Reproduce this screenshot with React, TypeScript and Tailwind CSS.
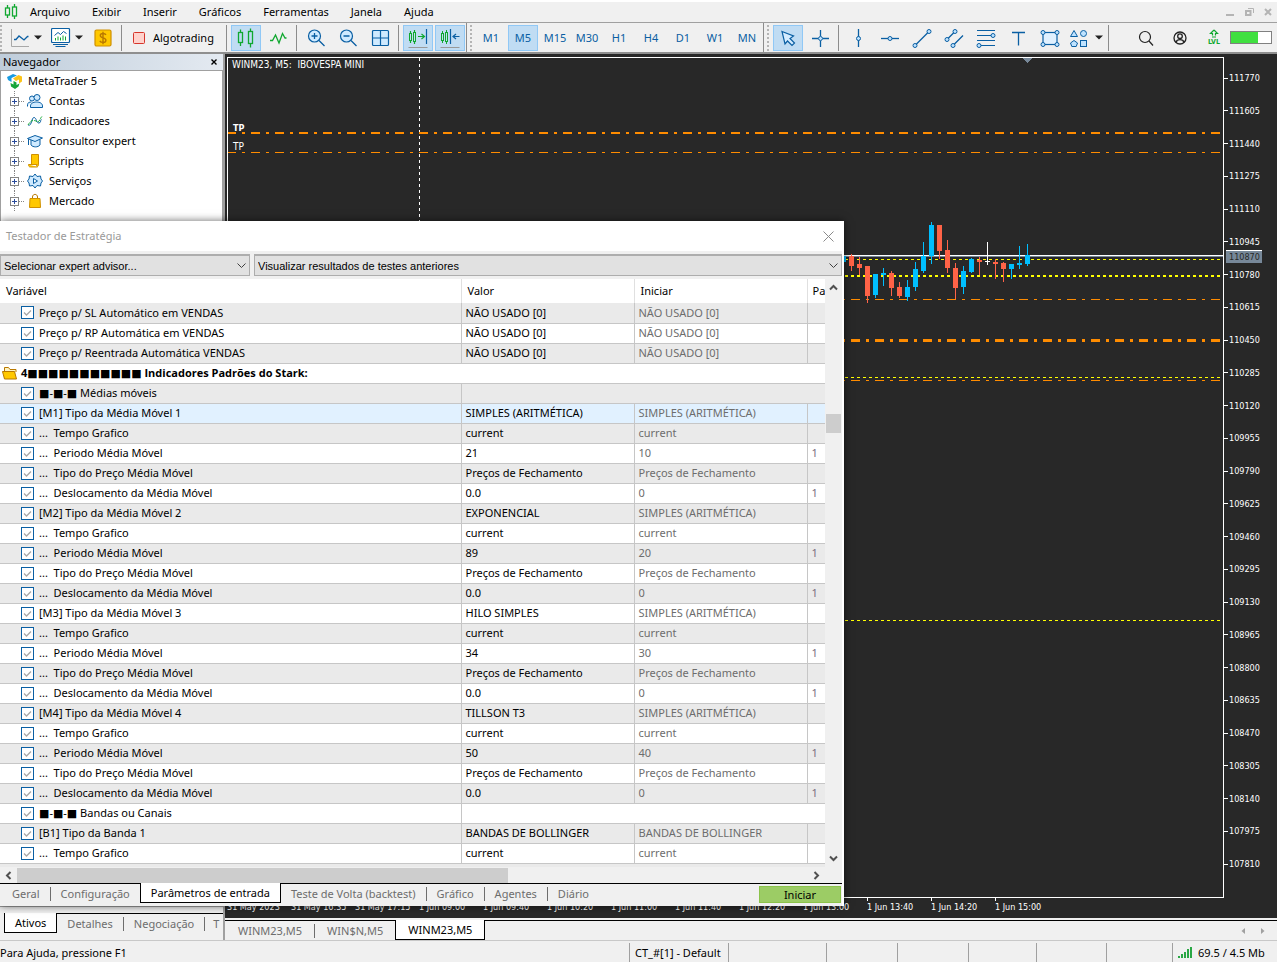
import { ReactNode } from 'react'
import clsx from 'clsx'

const MENU = ['Arquivo', 'Exibir', 'Inserir', 'Gráficos', 'Ferramentas', 'Janela', 'Ajuda']
const TIMEFRAMES = ['M1', 'M5', 'M15', 'M30', 'H1', 'H4', 'D1', 'W1', 'MN']
const PRICES = Array.from({ length: 25 }, (_, i) => 111770 - i * 165)
const TIMES = [
    '31 May 2023',
    '31 May 16:35',
    '31 May 17:15',
    '1 Jun 09:00',
    '1 Jun 09:40',
    '1 Jun 10:20',
    '1 Jun 11:00',
    '1 Jun 11:40',
    '1 Jun 12:20',
    '1 Jun 13:00',
    '1 Jun 13:40',
    '1 Jun 14:20',
    '1 Jun 15:00',
]

type Row = { label: string; value?: string; start?: string; step?: string; group?: boolean; section?: boolean }

const SIMPLE = 'SIMPLES (ARITMÉTICA)'
const CLOSE_PRICE = 'Preços de Fechamento'

function movingAverage(index: number, type: string, period: string, start: string): Row[] {
    return [
        { label: `[M${index}] Tipo da Média Móvel ${index}`, value: type, start: SIMPLE },
        { label: '...  Tempo Grafico', value: 'current', start: 'current' },
        { label: '...  Periodo Média Móvel', value: period, start, step: '1' },
        { label: '...  Tipo do Preço Média Móvel', value: CLOSE_PRICE, start: CLOSE_PRICE },
        { label: '...  Deslocamento da Média Móvel', value: '0.0', start: '0', step: '1' },
    ]
}

const ROWS: Row[] = [
    { label: 'Preço p/ SL Automático em VENDAS', value: 'NÃO USADO [0]', start: 'NÃO USADO [0]' },
    { label: 'Preço p/ RP Automática em VENDAS', value: 'NÃO USADO [0]', start: 'NÃO USADO [0]' },
    { label: 'Preço p/ Reentrada Automática VENDAS', value: 'NÃO USADO [0]', start: 'NÃO USADO [0]' },
    { label: '4■■■■■■■■■■■ Indicadores Padrões do Stark:', group: true },
    { label: '■-■-■ Médias móveis', section: true },
    ...movingAverage(1, SIMPLE, '21', '10'),
    ...movingAverage(2, 'EXPONENCIAL', '89', '20'),
    ...movingAverage(3, 'HILO SIMPLES', '34', '30'),
    ...movingAverage(4, 'TILLSON T3', '50', '40'),
    { label: '■-■-■ Bandas ou Canais', section: true },
    { label: '[B1] Tipo da Banda 1', value: 'BANDAS DE BOLLINGER', start: 'BANDAS DE BOLLINGER' },
    { label: '...  Tempo Grafico', value: 'current', start: 'current' },
]
const SELECTED_ROW = 5

// [color, body top, body bottom, wick top, wick bottom]
const UP = '#00bfff'
const DOWN = '#ff6347'
const CANDLES: [string, number, number, number, number][] = [
    [UP, 198, 204, 198, 204],
    [DOWN, 198, 208, 196, 213],
    [DOWN, 206, 210, 199, 217],
    [DOWN, 208, 238, 208, 245],
    [UP, 216, 237, 216, 240],
    [UP, 215, 217, 210, 228],
    [DOWN, 215, 230, 213, 238],
    [DOWN, 229, 238, 224, 240],
    [UP, 229, 239, 222, 243],
    [UP, 211, 229, 204, 233],
    [UP, 198, 213, 184, 215],
    [UP, 167, 198, 164, 206],
    [DOWN, 167, 193, 167, 201],
    [DOWN, 192, 210, 182, 215],
    [DOWN, 210, 230, 205, 241],
    [UP, 213, 229, 208, 236],
    [UP, 201, 214, 200, 215],
    [DOWN, 202, 204, 199, 217],
    ['#ffffff', 203, 204, 184, 207],
    [DOWN, 204, 206, 201, 221],
    [DOWN, 205, 211, 204, 224],
    [UP, 206, 211, 206, 221],
    [UP, 205, 207, 188, 211],
    [UP, 197, 206, 186, 208],
]

/* ---------- icons ---------- */

function Svg({ size = 20, children }: { size?: number; children: ReactNode }) {
    return (
        <svg width={size} height={size} viewBox={`0 0 ${size} ${size}`} fill="none" stroke="#0a5fa3" className="shrink-0">
            {children}
        </svg>
    )
}

function Caret() {
    return (
        <svg width="8" height="5" viewBox="0 0 8 5" className="shrink-0">
            <path d="M0 0.5h8L4 4.5z" fill="#222" />
        </svg>
    )
}

function Candles() {
    return (
        <Svg>
            <g stroke="#10a830" strokeWidth="1.3">
                <path d="M4.5 1.5v3M4.5 15v3M14.5 0.5v3M14.5 16v3.5" />
                <rect x="2.5" y="4.5" width="4" height="10" />
                <rect x="12.5" y="3.5" width="4" height="12" />
            </g>
        </Svg>
    )
}

const icons = {
    lineChart: (
        <Svg>
            <path d="M1.5 1v17.5H19" stroke="#a8a8a8" />
            <path d="M4 11.500h2l3-3.500 5 4 3.500-3.500h1" strokeWidth="1.3" />
        </Svg>
    ),
    profiles: (
        <Svg>
            <rect x="0.5" y="0.5" width="18" height="14" rx="1" fill="#fff" strokeWidth="1.2" />
            <path d="M3.5 7.500l3.500-3 2.500 2L12.500 3.500l3 2M2 16.500h15M4.500 18.500h10" />
            <path d="M4.5 12.500V10M7 12.500V8.500M9.500 12.500V9.500M12 12.500V7.500M14.500 12.500V8.500" stroke="#10a830" />
        </Svg>
    ),
    dollar: (
        <Svg>
            <rect x="2" y="2" width="16" height="16" rx="1.5" fill="#ffc800" stroke="#cf9000" strokeWidth="1.2" />
            <path
                d="M13 6.8c-.6-1-1.700-1.300-3-1.300-1.600 0-2.700.7-2.700 2 0 3 5.600 1.600 5.600 4.700 0 1.500-1.300 2.200-2.900 2.200-1.400 0-2.600-.5-3.200-1.600M10 3.800v12.500"
                stroke="#b87800"
                strokeWidth="1.4"
            />
        </Svg>
    ),
    stop: (
        <Svg size={12}>
            <rect x="0.5" y="0.5" width="11" height="11" rx="1" fill="#ffd2cc" stroke="#d6352b" />
        </Svg>
    ),
    wave: (
        <Svg>
            <path d="M2 12.500h2.500l3-5.500 3.500 8 3.500-9.500 2.500 4.500h1.500" stroke="#10a830" strokeWidth="1.3" />
        </Svg>
    ),
    zoomIn: (
        <Svg>
            <circle cx="8.5" cy="8" r="6" fill="#cfeaff" strokeWidth="1.2" />
            <path d="M5.5 8h6M8.500 5v6M13 12.500l5.500 5.500" strokeWidth="1.3" />
        </Svg>
    ),
    zoomOut: (
        <Svg>
            <circle cx="8.5" cy="8" r="6" fill="#cfeaff" strokeWidth="1.2" />
            <path d="M5.5 8h6M13 12.500l5.500 5.500" strokeWidth="1.3" />
        </Svg>
    ),
    tile: (
        <Svg>
            <rect x="2.5" y="2.5" width="16" height="15" rx="1" fill="#cfeaff" strokeWidth="1.2" />
            <path d="M10.5 2.500v15M2.500 10h16" strokeWidth="1.2" />
        </Svg>
    ),
    scrollEnd: (
        <Svg>
            <path d="M0.5 19.500h19" stroke="#999" />
            <g stroke="#10a830">
                <path d="M2.5 3v2.500M2.500 13v2M6.500 2v2.500M6.500 14v2M10 8.500h6.500M13.500 6l3 2.500-3 2.500" strokeWidth="1.2" />
                <rect x="1.5" y="5.5" width="2" height="7" />
                <rect x="5.5" y="4.5" width="2" height="9" />
            </g>
            <path d="M18.5 1v15" strokeWidth="1.2" />
        </Svg>
    ),
    shift: (
        <Svg>
            <path d="M0.5 19.500h19" stroke="#999" />
            <g stroke="#10a830">
                <path d="M2.5 3v2.500M2.500 13v2M6.500 2v2.500M6.500 14v2" />
                <rect x="1.5" y="5.5" width="2" height="7" />
                <rect x="5.5" y="4.5" width="2" height="9" />
            </g>
            <path d="M10.5 1v15M13 8.500h6.500M16 6l-3 2.500 3 2.500" strokeWidth="1.2" />
        </Svg>
    ),
    cursor: (
        <Svg>
            <path d="M4 3.500l11.500 4.500-3.500 2.500 4.500 4.500-2.500 2.500-4.500-4.500-2.500 3z" fill="#d5ecff" strokeWidth="1.2" />
        </Svg>
    ),
    crosshair: (
        <Svg>
            <path d="M10.5 2v6M10.500 13v6M2 10.500h6M13 10.500h6" strokeWidth="1.3" />
            <circle cx="10.5" cy="10.5" r="2" fill="#bfe3ff" />
        </Svg>
    ),
    vline: (
        <Svg>
            <path d="M10.5 1v18" strokeWidth="1.3" />
            <circle cx="10.5" cy="10.5" r="2" fill="#bfe3ff" />
        </Svg>
    ),
    hline: (
        <Svg>
            <path d="M1 10.500h18" strokeWidth="1.3" />
            <circle cx="10" cy="10.5" r="2" fill="#bfe3ff" />
        </Svg>
    ),
    trend: (
        <Svg>
            <path d="M3 17.500L17 3.500" strokeWidth="1.3" />
            <circle cx="3" cy="17.5" r="2" fill="#bfe3ff" />
            <circle cx="17" cy="3.5" r="2" fill="#bfe3ff" />
        </Svg>
    ),
    channel: (
        <Svg>
            <path d="M3 11.500l8-8M9 17.500L19 7.500" strokeWidth="1.3" />
            <circle cx="3" cy="11.5" r="2" fill="#bfe3ff" />
            <circle cx="11" cy="3.5" r="2" fill="#bfe3ff" />
            <circle cx="9" cy="17.5" r="2" fill="#bfe3ff" />
        </Svg>
    ),
    fibo: (
        <Svg>
            <path d="M1 2.500h18M1 7.500h16M1 12.500h18M3 17.500h16" strokeWidth="1.2" />
            <circle cx="17" cy="7.5" r="2" fill="#bfe3ff" />
            <circle cx="3" cy="17.5" r="2" fill="#bfe3ff" />
        </Svg>
    ),
    text: (
        <Svg>
            <path d="M4 4.500h13M10.500 4.500v13" strokeWidth="1.3" />
        </Svg>
    ),
    rect: (
        <Svg>
            <rect x="3" y="4.5" width="14" height="12" fill="#e0f1ff" strokeWidth="1.2" />
            <g fill="#bfe3ff">
                <circle cx="3" cy="4.5" r="2" />
                <circle cx="17" cy="4.5" r="2" />
                <circle cx="3" cy="16.5" r="2" />
                <circle cx="17" cy="16.5" r="2" />
            </g>
        </Svg>
    ),
    shapes: (
        <Svg>
            <g fill="#bfe3ff">
                <path d="M5 2.500l3.500 6h-7z" />
                <circle cx="14.5" cy="5.5" r="3" />
                <path d="M5 12.500l3.500 2.500-1.300 3.500H2.800L1.500 15z" />
                <rect x="11.5" y="12.5" width="6" height="6" />
            </g>
        </Svg>
    ),
    search: (
        <Svg>
            <circle cx="9" cy="9" r="5.5" stroke="#222" strokeWidth="1.2" />
            <path d="M13 13l4 4.500" stroke="#222" strokeWidth="1.2" />
        </Svg>
    ),
    user: (
        <Svg>
            <g stroke="#222" strokeWidth="1.3">
                <circle cx="10" cy="10" r="6" />
                <circle cx="10" cy="8.2" r="2.3" />
                <path d="M6 14.500c.5-2 2-2.800 4-2.800s3.500.8 4 2.800" />
            </g>
        </Svg>
    ),
    contas: (
        <Svg size={16}>
            <g fill="#cfeaff">
                <circle cx="5" cy="5.5" r="2.5" />
                <path d="M0.500 13.500v-2c0-1.500 1.500-2.500 4-2.500" />
                <circle cx="10" cy="4.5" r="3" />
                <path d="M3.500 14.500v-1.500c0-2.500 2.500-4 6-4s6 1.500 6 4v1.500z" />
            </g>
        </Svg>
    ),
    indicadores: (
        <Svg size={16}>
            <path d="M1.500 12.500c3.500 0 3-8 5.500-8s2.500 6 5 5.500 1-3 2.500-3.500" />
            <path d="M1 12c2-3 3-4.500 6-4.500s3 3 5 .5 1.500-3.500 3.500-5" stroke="#10a830" strokeDasharray="3 1" />
        </Svg>
    ),
    consultor: (
        <Svg size={16}>
            <path d="M4 7v5c2 2.500 7 2.500 9 0V6.500" fill="#cfeaff" />
            <path d="M0.5 5.500l7.500-3 7.500 2.500-7.500 3.500zM1.500 6v6" fill="#cfeaff" />
        </Svg>
    ),
    scripts: (
        <Svg size={16}>
            <path d="M4.500 1.500h7v10h-7z" fill="#ffc800" stroke="#cf9000" />
            <path d="M1.500 11.500h8v1c0 1.500 2 1.500 2-1M1.500 11.500c0 1.500.5 2.500 2 2.500h7" fill="#ffc800" stroke="#cf9000" />
        </Svg>
    ),
    servicos: (
        <Svg size={16}>
            <path
                d="M8 1l2 2.500 3.500-.5.500 3L15.500 8 14 10l-.5 3-3.500-.5L8 15l-2-2.500-3.500.5L2 10 .5 8 2 6l.5-3 3.500.5z"
                fill="#cfeaff"
            />
            <path d="M6.500 5.500l4 2.500-4 2.500z" fill="#fff" />
        </Svg>
    ),
    mercado: (
        <Svg size={16}>
            <path d="M5.500 6V4c0-3.500 5-3.500 5 0v2" stroke="#b87800" />
            <path d="M3 5.500h10l.5 9h-11z" fill="#ffc800" stroke="#cf9000" />
        </Svg>
    ),
}

function LevelIcon() {
    return (
        <span className="flex flex-col items-center">
            <svg width="10" height="9" viewBox="0 0 10 9" fill="none" stroke="#10a830" strokeWidth="1.2">
                <path d="M5 1L1.500 4.500h2V6.500M5 1l3.500 3.500h-2V6.500M3 8h4" />
            </svg>
            <span className="font-['DejaVu_Sans_Condensed','DejaVu_Sans',sans-serif] text-[7px] font-bold leading-[8px] text-[#10a830]">
                LVL
            </span>
        </span>
    )
}

/* ---------- toolbar ---------- */

function Tool({ label, active, wide, children }: { label: string; active?: boolean; wide?: boolean; children: ReactNode }) {
    return (
        <button
            aria-label={label}
            className={clsx(
                'flex h-[26px] shrink-0 items-center justify-center border',
                wide ? 'w-[38px] gap-1.5' : 'w-[30px]',
                active ? 'border-[#90c8f6] bg-[#c0dcf3]' : 'border-transparent',
            )}
        >
            {children}
        </button>
    )
}

const Separator = () => <span className="ml-[3px] mr-1 h-[26px] w-px shrink-0 bg-[#8c8c8c]" />
const Grip = () => <span className="h-[26px] w-0 shrink-0 border-l-2 border-dotted border-[#b4b4b4]" />

function GroupEnd() {
    return (
        <span className="flex shrink-0 items-center gap-[3px] pl-px pr-1">
            <span className="h-[29px] w-px bg-[#8c8c8c]" />
            <Grip />
        </span>
    )
}

function Toolbar() {
    return (
        <div className="flex h-8 items-center border-b-2 border-t border-b-[#8f8f8f] border-t-[#a0a0a0] bg-[#f0f0f0]">
            <Grip />
            <button aria-label="Novo gráfico" className="ml-2 flex w-[41px] shrink-0 items-center gap-1">
                {icons.lineChart}
                <Caret />
            </button>
            <button aria-label="Perfis" className="flex w-[37px] shrink-0 items-center gap-1">
                {icons.profiles}
                <Caret />
            </button>
            <Tool label="Depósito">{icons.dollar}</Tool>
            <Separator />
            <button className="flex w-[97px] shrink-0 items-center gap-2 pl-[7px] text-black">
                {icons.stop}
                Algotrading
            </button>
            <Separator />
            <div className="flex gap-0.5">
                <Tool label="Candles" active>
                    <Candles />
                </Tool>
                <Tool label="Linha">{icons.wave}</Tool>
            </div>
            <Separator />
            <div className="flex gap-0.5">
                <Tool label="Mais zoom">{icons.zoomIn}</Tool>
                <Tool label="Menos zoom">{icons.zoomOut}</Tool>
                <Tool label="Lado a lado">{icons.tile}</Tool>
            </div>
            <Separator />
            <div className="flex gap-0.5">
                <Tool label="Rolagem automática" active>
                    {icons.scrollEnd}
                </Tool>
                <Tool label="Deslocar gráfico" active>
                    {icons.shift}
                </Tool>
            </div>
            <GroupEnd />
            <div className="flex gap-0.5 text-[#0a5fa3]">
                {TIMEFRAMES.map((tf) => (
                    <Tool key={tf} label={tf} active={tf === 'M5'}>
                        {tf}
                    </Tool>
                ))}
            </div>
            <GroupEnd />
            <div className="flex gap-0.5">
                <Tool label="Cursor" active>
                    {icons.cursor}
                </Tool>
                <Tool label="Mira">{icons.crosshair}</Tool>
            </div>
            <Separator />
            <div className="flex gap-0.5">
                <Tool label="Linha vertical">{icons.vline}</Tool>
                <Tool label="Linha horizontal">{icons.hline}</Tool>
                <Tool label="Linha de tendência">{icons.trend}</Tool>
                <Tool label="Canal">{icons.channel}</Tool>
                <Tool label="Fibonacci">{icons.fibo}</Tool>
                <Tool label="Texto">{icons.text}</Tool>
                <Tool label="Retângulo">{icons.rect}</Tool>
                <Tool label="Objetos" wide>
                    {icons.shapes}
                    <Caret />
                </Tool>
            </div>
            <Separator />
            <div className="ml-auto flex items-center gap-1 pr-px">
                <Tool label="Pesquisar">{icons.search}</Tool>
                <Tool label="Conta">{icons.user}</Tool>
                <Tool label="Nível">
                    <LevelIcon />
                </Tool>
            </div>
            <div className="mr-[5px] flex h-[13px] w-[42px] border border-[#808080] bg-white">
                <span className="w-2/3 bg-[#40e040]" />
            </div>
        </div>
    )
}

function MenuBar() {
    return (
        <div className="flex h-[22px] items-center border-t-2 border-white bg-[#f0f0f0] pl-1 pr-[5px] text-black">
            <svg width="15" height="16" viewBox="0 0 15 16" fill="none" stroke="#10a830" strokeWidth="1.3">
                <path d="M3.5 1v3M3.500 11v3M10.500 0v3M10.500 12v3" />
                <rect x="1.5" y="4" width="4" height="7" />
                <rect x="8.5" y="3" width="4" height="9" />
            </svg>
            <nav className="flex">
                {MENU.map((item) => (
                    <button key={item} className="px-[11px]">
                        {item}
                    </button>
                ))}
            </nav>
            <div className="ml-auto flex items-center gap-2.5">
                <button aria-label="Minimizar">
                    <svg width="9" height="8" viewBox="0 0 9 8">
                        <path d="M0 7h8" stroke="#b4b4b4" strokeWidth="2" />
                    </svg>
                </button>
                <button aria-label="Restaurar">
                    <svg width="9" height="8" viewBox="0 0 9 8" fill="none" stroke="#b4b4b4">
                        <path d="M3 0.500h5.500V5" />
                        <rect x="1" y="3" width="4.5" height="4" strokeWidth="2" />
                    </svg>
                </button>
                <button aria-label="Fechar">
                    <svg width="8" height="8" viewBox="0 0 8 8">
                        <path d="M1 1l6 6M7 1L1 7" stroke="#b4b4b4" strokeWidth="2" />
                    </svg>
                </button>
            </div>
        </div>
    )
}

/* ---------- navigator ---------- */

const TREE = [
    { label: 'Contas', icon: icons.contas },
    { label: 'Indicadores', icon: icons.indicadores },
    { label: 'Consultor expert', icon: icons.consultor },
    { label: 'Scripts', icon: icons.scripts },
    { label: 'Serviços', icon: icons.servicos },
    { label: 'Mercado', icon: icons.mercado },
]

function Navigator() {
    return (
        <aside className="flex w-[225px] shrink-0 flex-col border-r-2 border-[#a0a0a0] bg-[#f0f0f0] text-black">
            <header className="flex h-4 items-center justify-between bg-linear-to-r from-[#bfcddb] to-[#e4eaf1] pl-[3px] pr-1.5">
                Navegador
                <button aria-label="Fechar navegador">
                    <svg width="6" height="6" viewBox="0 0 6 6">
                        <path d="M0.5 0.500l5 5M5.500 0.500l-5 5" stroke="#000" strokeWidth="1.4" />
                    </svg>
                </button>
            </header>
            <div className="flex-1 border border-[#a0a0a0] bg-white">
                <div className="flex h-5 items-center gap-1.5 pl-1.5">
                    <svg width="15" height="15" viewBox="0 0 15 15">
                        <path d="M0 3L6 0l4 1.5L4.500 4v4L1 6z" fill="#1a9be0" />
                        <path d="M6 4.500L11.500 1 15 2.500V7.500l-3 2V5.500L9 7z" fill="#fcc419" />
                        <path d="M3.500 9l3 1.500V7l3 1.500V11l3-1.500-1 3L8 15l-4-2.500z" fill="#16a63a" />
                    </svg>
                    MetaTrader 5
                </div>
                <ul>
                    {TREE.map(({ label, icon }) => (
                        <li key={label} className="flex h-5 items-center pl-[9px]">
                            <svg width="17" height="20" viewBox="0 0 17 20" fill="none" stroke="#848484" shapeRendering="crispEdges">
                                <path d="M4.500 0v6M4.500 15v5M9 10.500h5" strokeDasharray="1 1" />
                                <rect x="0.5" y="6.5" width="8" height="8" fill="#fff" />
                                <path d="M2 10.500h5M4.500 8v5" stroke="#2b4b9b" />
                            </svg>
                            {icon}
                            <span className="pl-1.5">{label}</span>
                        </li>
                    ))}
                </ul>
            </div>
            <div className="mt-1.5 flex h-[27px] shrink-0 items-start pl-1">
                <div className="flex flex-1 items-start border-t border-black">
                    <ActiveTab>Ativos</ActiveTab>
                    <Tab>Detalhes</Tab>
                    <Tab>Negociação</Tab>
                    <button className="h-[19px] pl-2 text-[#6d6d6d]">T</button>
                </div>
            </div>
        </aside>
    )
}

function Tab({ children, last, roomy }: { children: ReactNode; last?: boolean; roomy?: boolean }) {
    return (
        <button className="flex h-[19px] shrink-0 items-center text-[#6d6d6d]">
            <span className={roomy ? 'px-3' : 'px-2.5'}>{children}</span>
            {!last && <span className="h-3.5 w-px bg-[#6d6d6d]" />}
        </button>
    )
}

// overlaps the black rule above the tab strip
function ActiveTab({ children, roomy }: { children: ReactNode; roomy?: boolean }) {
    return (
        <button
            className={clsx(
                '-mt-px h-5 shrink-0 border-x border-b border-black bg-white text-black',
                roomy ? 'px-3' : 'px-2.5',
            )}
        >
            {children}
        </button>
    )
}

/* ---------- chart ---------- */

function Level({ y, color, width = 1, dash }: { y: number; color: string; width?: number; dash?: string }) {
    return <line x1="0" x2="100%" y1={y} y2={y} stroke={color} strokeWidth={width} strokeDasharray={dash} strokeDashoffset="1" />
}

const DASH_DOT = '9 6 3 6'
const ORANGE = '#ff8c00'

function Chart() {
    return (
        <div className="flex min-w-0 flex-1 flex-col">
            <div className="flex flex-1 flex-col bg-[#282828] pl-0.5 pt-[3px] font-['DejaVu_Sans_Condensed','DejaVu_Sans',sans-serif] text-[9px] leading-3 text-white">
                <div className="flex flex-1">
                    <div className="relative flex-1 border border-white">
                        <svg className="absolute inset-0 h-full w-full" shapeRendering="crispEdges">
                            <path d="M795 0h9l-4.500 5z" fill="#778899" />
                            <line x1="191.5" x2="191.5" y1="0" y2="100%" stroke="#fff" strokeDasharray="3 3" />
                            <Level y={75} color={ORANGE} width={2} dash={DASH_DOT} />
                            <Level y={94.5} color={ORANGE} dash={DASH_DOT} />
                            <Level y={201.5} color="#ffff00" dash="3 3" />
                            <Level y={218} color="#ffff00" width={2} dash="3 3" />
                            <Level y={241.5} color={ORANGE} dash={DASH_DOT} />
                            <Level y={282.5} color={ORANGE} width={3} dash={DASH_DOT} />
                            <Level y={319.5} color="#ffff00" dash="3 3" />
                            <Level y={322.5} color={ORANGE} dash={DASH_DOT} />
                            <Level y={562.5} color="#ffff00" dash="3 3" />
                            <Level y={197.5} color="#ffffff" />
                            <Level y={198.5} color="#778899" />
                            {CANDLES.map(([color, top, bottom, high, low], i) => (
                                <g key={i} fill={color}>
                                    <rect x={613 + i * 8} y={top} width="5" height={bottom - top} />
                                    <rect x={615 + i * 8} y={high} width="1" height={low - high} />
                                </g>
                            ))}
                            <g fill="#fff" fontSize="10">
                                <text x="4" y="10">
                                    WINM23, M5:&nbsp; IBOVESPA MINI
                                </text>
                                <text x="5" y="73" fontWeight="bold" fontSize="9">
                                    TP
                                </text>
                                <text x="5" y="92">
                                    TP
                                </text>
                            </g>
                        </svg>
                    </div>
                    <div className="relative flex w-[53px] shrink-0 flex-col justify-between pb-7 pt-[15px]">
                        {PRICES.map((price) => (
                            <span key={price} className="flex items-center gap-px">
                                <span className="h-px w-1 bg-white" />
                                {price}
                            </span>
                        ))}
                        <span className="absolute left-0.5 top-[193px] w-9 border-t border-white bg-[#778899] pl-[3px] text-[#282828]">
                            110870
                        </span>
                    </div>
                </div>
                <div className="flex h-5 overflow-hidden">
                    {TIMES.map((time) => (
                        <span key={time} className="w-16 shrink-0 whitespace-nowrap">
                            <span className="block h-[3px] w-px bg-white" />
                            {time}
                        </span>
                    ))}
                </div>
            </div>
            <div className="mt-[2px] flex h-5 items-start border-t border-black text-[#6d6d6d]">
                <div className="flex pl-px">
                    <Tab roomy>WINM23,M5</Tab>
                    <Tab roomy last>
                        WIN$N,M5
                    </Tab>
                </div>
                <ActiveTab roomy>WINM23,M5</ActiveTab>
                <div className="ml-auto flex gap-4 self-center pr-3">
                    <button aria-label="Anterior">
                        <svg width="4" height="6" viewBox="0 0 4 6">
                            <path d="M4 0v6L0.500 3z" fill="#a0a0a0" />
                        </svg>
                    </button>
                    <button aria-label="Próximo">
                        <svg width="4" height="6" viewBox="0 0 4 6">
                            <path d="M0 0v6l3.500-3z" fill="#a0a0a0" />
                        </svg>
                    </button>
                </div>
            </div>
        </div>
    )
}

/* ---------- strategy tester ---------- */

function Chevron({ direction }: { direction: 'up' | 'down' | 'left' | 'right' }) {
    return (
        <svg
            width="9"
            height="9"
            viewBox="0 0 9 9"
            className={clsx(
                direction === 'up' && 'rotate-180',
                direction === 'left' && 'rotate-90',
                direction === 'right' && '-rotate-90',
            )}
        >
            <path d="M1 2.500l3.500 3.500L8 2.500" fill="none" stroke="#505050" strokeWidth="2" />
        </svg>
    )
}

function Select({ label, value, className }: { label: string; value: string; className?: string }) {
    return (
        <div className={clsx('relative', className)}>
            <select
                aria-label={label}
                className="h-[22px] w-full appearance-none border border-t-2 border-[#adadad] bg-[#e1e1e1] pl-[3px] font-['Liberation_Sans',sans-serif] text-[11px] text-black"
            >
                <option>{value}</option>
            </select>
            <svg width="9" height="6" viewBox="0 0 9 6" className="pointer-events-none absolute right-1 top-[9px]">
                <path d="M0.500 0.500l4 4 4-4" fill="none" stroke="#404040" />
            </svg>
        </div>
    )
}

function VariableCell({ label, id }: { label: string; id: string }) {
    return (
        <div className="flex items-center gap-[5px] pl-[21px]">
            <span className="grid">
                <input
                    id={id}
                    type="checkbox"
                    defaultChecked
                    className="col-start-1 row-start-1 size-[13px] appearance-none border border-[#0a5fa3] bg-white"
                />
                <svg width="13" height="13" viewBox="0 0 13 13" className="pointer-events-none col-start-1 row-start-1">
                    <path d="M3 6.500L5.500 9 10 4.500" fill="none" stroke="#a8a8a8" strokeWidth="1.3" />
                </svg>
            </span>
            <label htmlFor={id} className="whitespace-pre">
                {label}
            </label>
        </div>
    )
}

function ParameterRow({ row, index }: { row: Row; index: number }) {
    const background = index === SELECTED_ROW ? 'bg-[#e1f1ff]' : index % 2 ? 'bg-white' : 'bg-[#eaeaea]'

    if (row.group) {
        return (
            <tr className={clsx('h-5 border-b border-[#c6c6c6]', background)}>
                <td colSpan={4} className="p-0 font-bold">
                    <div className="flex items-center gap-[3px] pl-0.5 font-['Open_Sans','DejaVu_Sans',sans-serif]">
                        <svg width="16" height="14" viewBox="0 0 16 14" stroke="#b87800">
                            <path d="M2.500 12V1.500h4l1.500 2h6V6" fill="#fff3c0" />
                            <path d="M0.500 5.500h12l2 7.500h-12z" fill="#ffc800" />
                        </svg>
                        {row.label}
                    </div>
                </td>
            </tr>
        )
    }

    return (
        <tr className={clsx('h-5 border-b border-[#c6c6c6]', background)}>
            <td className="border-r border-[#c6c6c6] p-0">
                <VariableCell label={row.label} id={`param-${index}`} />
            </td>
            {row.section ? (
                <td colSpan={3} />
            ) : (
                <>
                    <td className="border-r border-[#c6c6c6] px-1 py-0">{row.value}</td>
                    <td className="border-r border-[#c6c6c6] px-1 py-0 text-[#6d6d6d]">{row.start}</td>
                    <td className="px-1 py-0 text-[#7d6d7d]">{row.step}</td>
                </>
            )}
        </tr>
    )
}

function StrategyTester() {
    return (
        <section className="absolute left-0 top-[167px] w-[844px] border-r-2 border-white bg-[#f0f0f0] text-black shadow-[0_0_8px_rgba(0,0,0,0.6)]">
            <header className="flex h-[30px] items-center justify-between bg-white pl-1.5 pr-2 text-[#999]">
                Testador de Estratégia
                <button aria-label="Fechar testador">
                    <svg width="11" height="11" viewBox="0 0 11 11">
                        <path d="M0.500 0.500l10 10M10.500 0.500l-10 10" stroke="#8a8a8a" />
                    </svg>
                </button>
            </header>
            <div className="flex gap-1 pb-[3px] pt-[3px]">
                <Select label="Expert advisor" value="Selecionar expert advisor..." className="w-[250px]" />
                <Select label="Resultados" value="Visualizar resultados de testes anteriores" className="flex-1" />
            </div>
            <div className="flex">
                <div className="h-[588px] w-[825px] overflow-hidden bg-[#eaeaea]">
                    <table className="w-full table-fixed border-collapse text-left">
                        <colgroup>
                            <col className="w-[461px]" />
                            <col className="w-[173px]" />
                            <col className="w-[173px]" />
                            <col />
                        </colgroup>
                        <thead>
                            <tr className="h-6 bg-white">
                                <th className="border-r border-[#e0e0e0] px-1.5 py-0 font-normal">Variável</th>
                                <th className="border-r border-[#e0e0e0] px-1.5 py-0 font-normal">Valor</th>
                                <th className="border-r border-[#e0e0e0] px-1.5 py-0 font-normal">Iniciar</th>
                                <th className="py-0 pl-[5px] pr-0 font-normal">Pa</th>
                            </tr>
                        </thead>
                        <tbody>
                            {ROWS.map((row, index) => (
                                <ParameterRow key={index} row={row} index={index} />
                            ))}
                        </tbody>
                    </table>
                </div>
                <div className="ml-px flex w-[15px] flex-col items-center py-1">
                    <Chevron direction="up" />
                    <span className="mt-[122px] h-[19px] w-[15px] bg-[#cdcdcd]" />
                    <span className="mt-auto">
                        <Chevron direction="down" />
                    </span>
                </div>
            </div>
            <div className="flex h-4 w-[825px] items-center pl-1 pr-1">
                <Chevron direction="left" />
                <span className="ml-1 h-[15px] w-[491px] bg-[#cdcdcd]" />
                <span className="ml-auto">
                    <Chevron direction="right" />
                </span>
            </div>
            <div className="flex items-start border-t border-black pb-[3px]">
                <div className="flex pl-0.5">
                    <Tab>Geral</Tab>
                    <Tab last>Configuração</Tab>
                </div>
                <ActiveTab>Parâmetros de entrada</ActiveTab>
                <Tab>Teste de Volta (backtest)</Tab>
                <Tab>Gráfico</Tab>
                <Tab>Agentes</Tab>
                <Tab last>Diário</Tab>
                <button className="ml-auto mr-px mt-0.5 h-[17px] w-[82px] border border-[#8bc34a] bg-[#9ccc65]">Iniciar</button>
            </div>
        </section>
    )
}

function StatusBar() {
    return (
        <footer className="flex h-[22px] items-end border-t border-[#c8c8c8] leading-[19px] text-black">
            <span className="flex-1">Para Ajuda, pressione F1</span>
            <span className="h-[19px] w-[99px] whitespace-nowrap border-l border-[#a0a0a0] pl-[5px]">CT_#[1] - Default</span>
            <span className="h-[19px] w-[98px] border-l border-[#a0a0a0]" />
            <span className="h-[19px] w-[71px] border-l border-[#a0a0a0]" />
            <span className="h-[19px] w-[71px] border-l border-[#a0a0a0]" />
            <span className="h-[19px] w-[68px] border-l border-[#a0a0a0]" />
            <span className="h-[19px] w-[70px] border-l border-[#a0a0a0]" />
            <span className="h-[19px] w-[66px] border-l border-[#a0a0a0]" />
            <span className="flex h-[19px] w-[105px] items-center gap-1.5 whitespace-nowrap border-l border-[#a0a0a0] pl-[5px]">
                <svg width="14" height="11" viewBox="0 0 14 11" fill="#2aa745" shapeRendering="crispEdges">
                    <path d="M0 9h2v2H0zM3 7h2v4H3zM6 5h2v6H6zM9 2h2v9H9zM12 0h2v11h-2z" />
                </svg>
                69.5 / 4.5 Mb
            </span>
        </footer>
    )
}

export default function App() {
    return (
        <div className="flex min-h-screen flex-col bg-[#f0f0f0] font-['Noto_Sans','DejaVu_Sans',sans-serif] text-[11px] leading-4">
            <MenuBar />
            <Toolbar />
            <main className="relative flex flex-1">
                <Navigator />
                <Chart />
                <StrategyTester />
            </main>
            <StatusBar />
        </div>
    )
}
